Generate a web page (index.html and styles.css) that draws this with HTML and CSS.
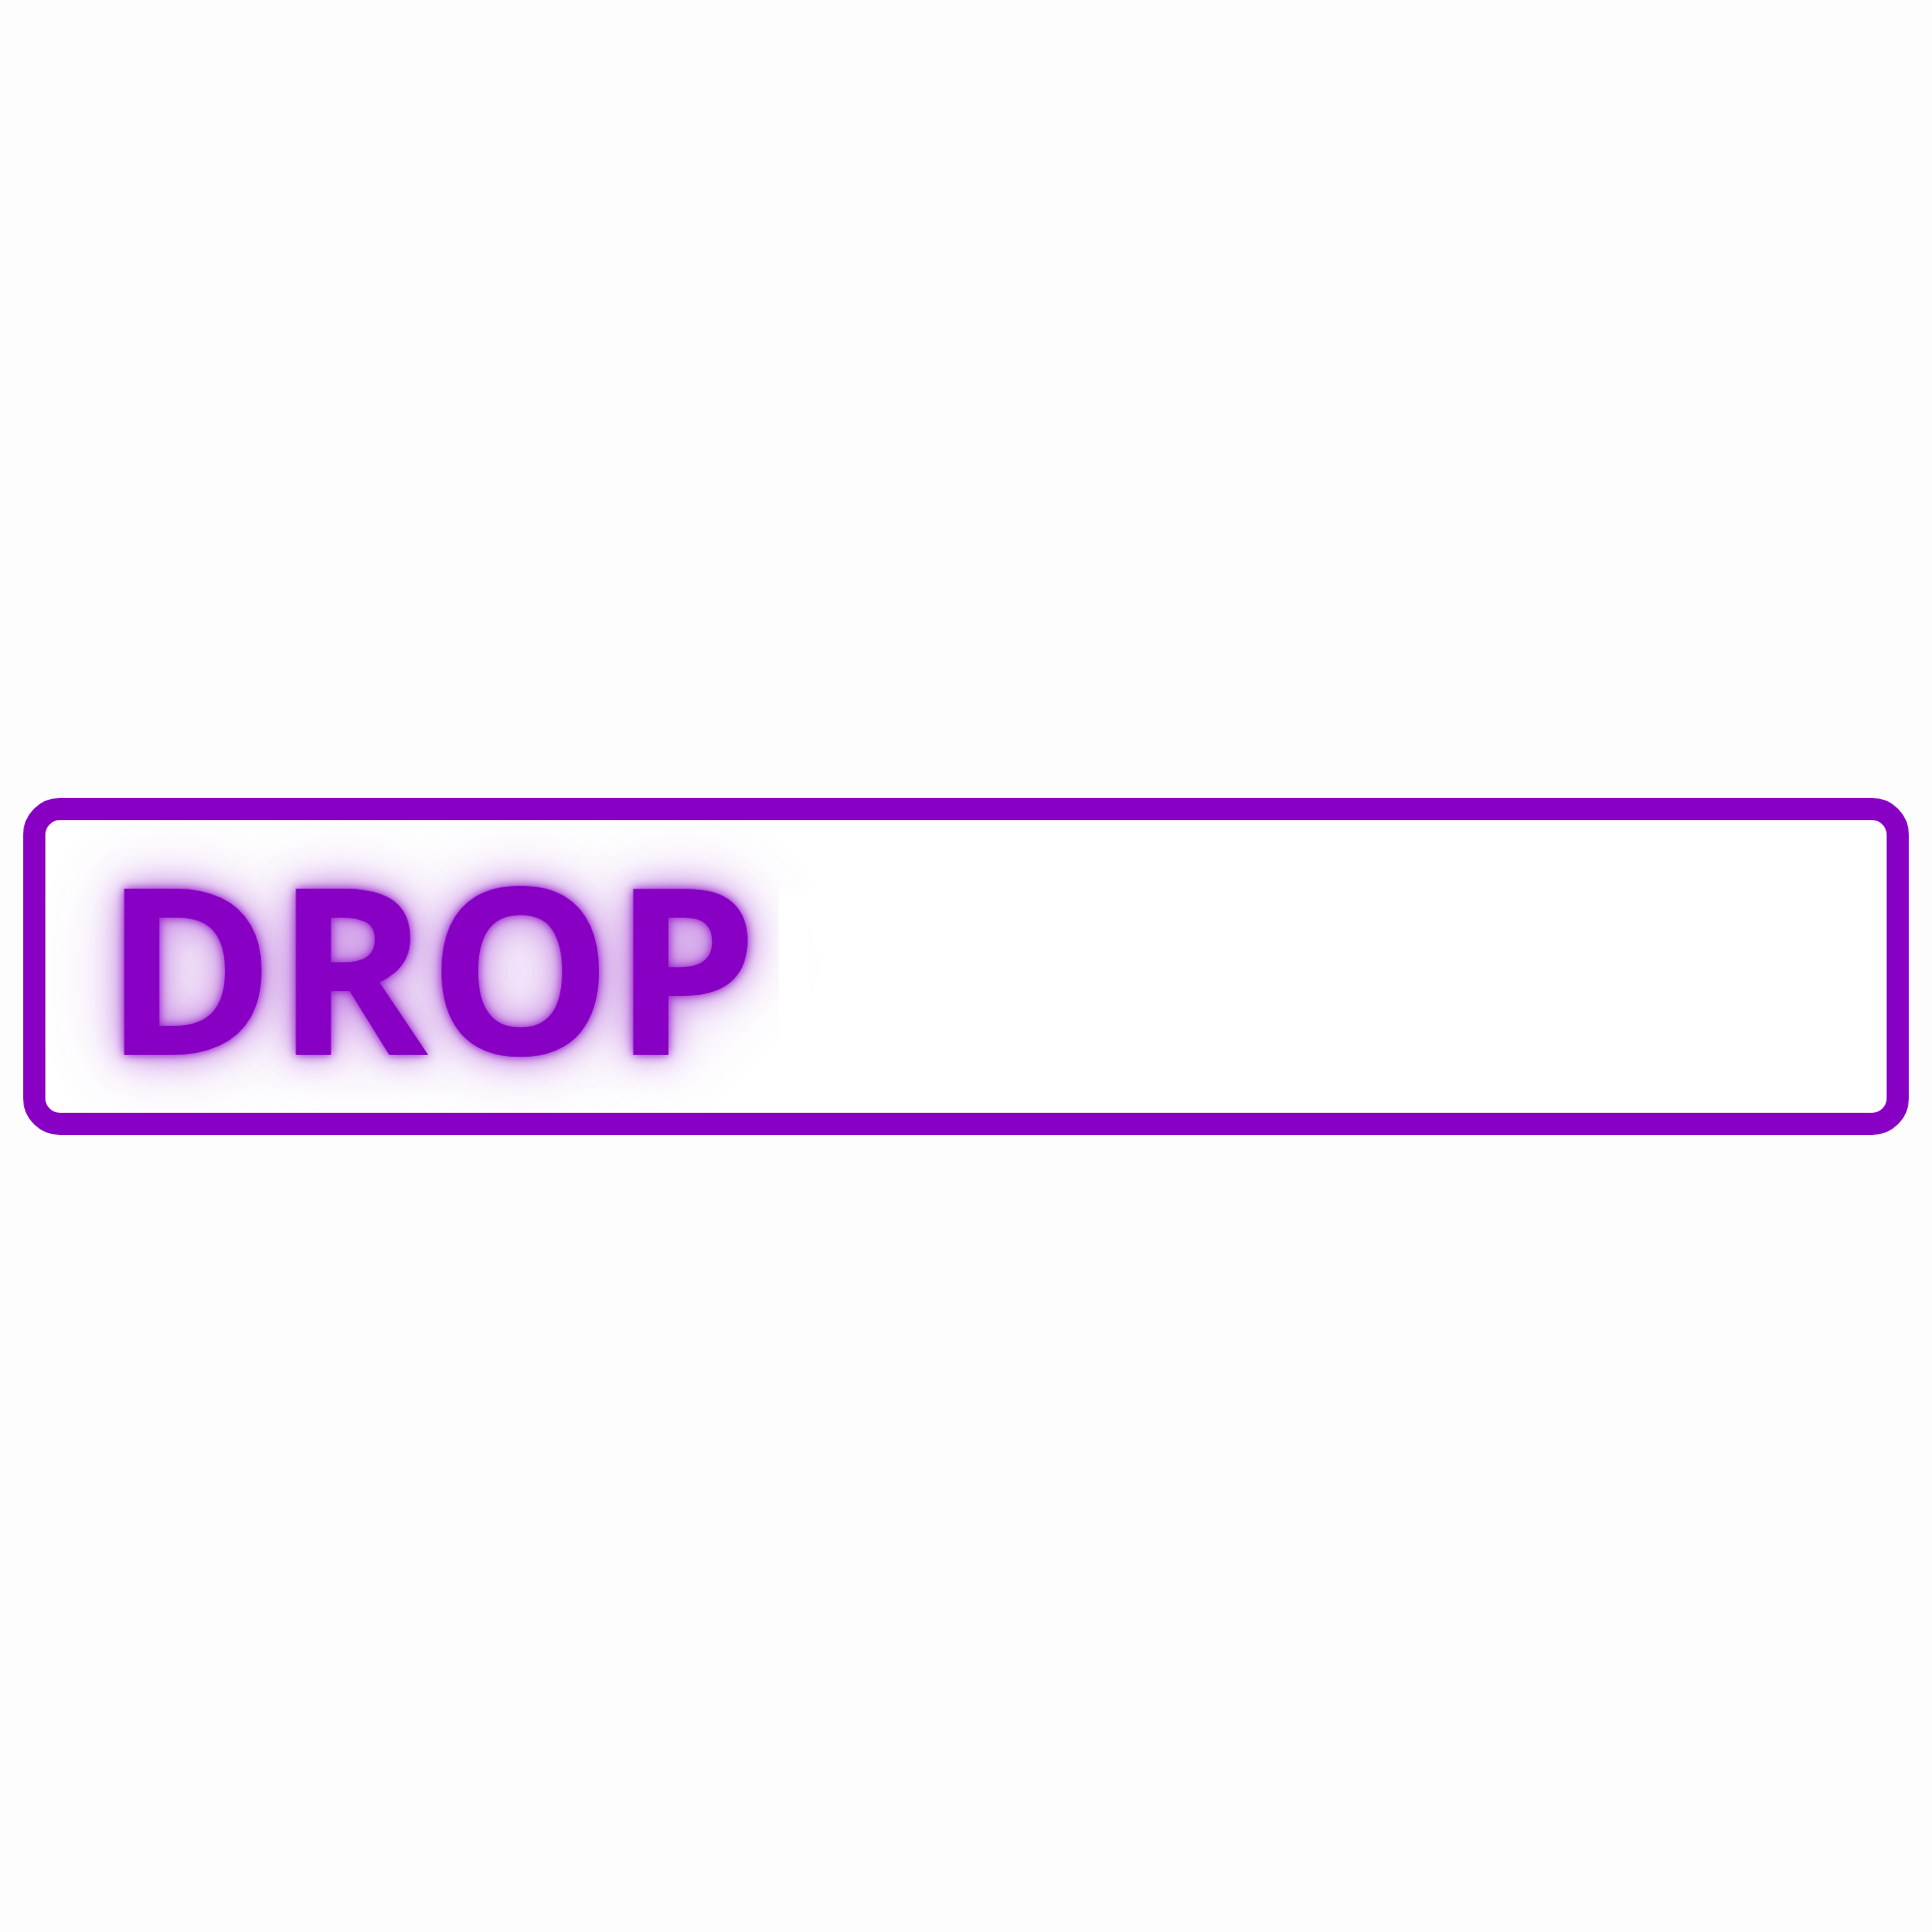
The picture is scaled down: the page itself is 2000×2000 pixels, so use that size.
FILE: index.html
```html
<!DOCTYPE html>
<html lang="en">
<head>
<meta charset="utf-8">
<title>Drop</title>
<link rel="stylesheet" href="styles.css">
</head>
<body>
<div class="stage">
  <div class="field">
    <span class="label"><span class="lit">DROP</span><span class="dim">ME</span></span>
  </div>
</div>
</body>
</html>
```
FILE: styles.css
```css
html, body {
  margin: 0;
  padding: 0;
  background: #fdfdfd;
}
.stage {
  min-height: 100vh;
  display: flex;
  align-items: center;
  justify-content: center;
}
.field {
  box-sizing: border-box;
  width: calc(100% - 48px);
  border: 23px solid #8800c4;
  border-radius: 38px;
  background: #ffffff;
  padding: 30px 60px 33px;
  display: flex;
  align-items: center;
}
.label {
  font-family: "Open Sans", "Liberation Sans", sans-serif;
  font-weight: 700;
  font-size: 240px;
  line-height: 240px;
  white-space: nowrap;
}
.lit {
  color: #8800c4;
  text-shadow: 0 0 10px rgba(136, 0, 196, 0.9), 0 0 35px rgba(136, 0, 196, 0.55), 0 0 80px rgba(136, 0, 196, 0.3);
}
.dim {
  color: #ffffff;
}
```
